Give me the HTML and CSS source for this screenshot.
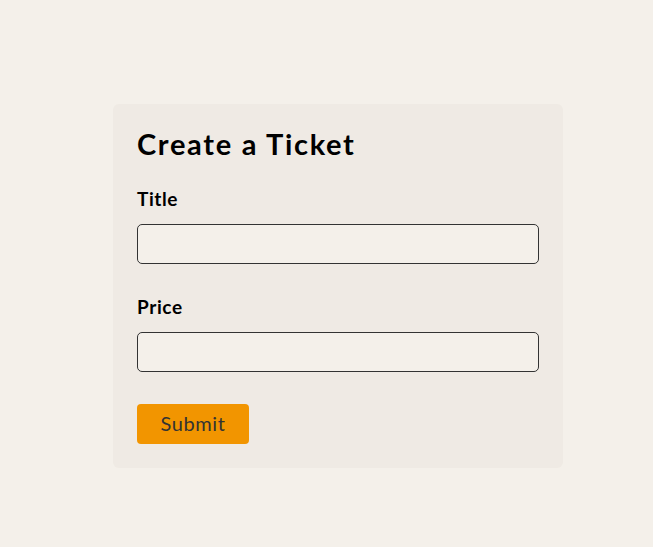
FILE: index.html
```html
<!DOCTYPE html>
<html>
<head>
<meta charset="utf-8">
<link rel="stylesheet" href="styles.css">
</head>
<body>
<main class="page">
  <form class="card">
    <h1 class="card-title">Create a Ticket</h1>
    <div class="field">
      <label class="field-label" for="title">Title</label>
      <input class="field-input" id="title" type="text">
    </div>
    <div class="field">
      <label class="field-label" for="price">Price</label>
      <input class="field-input" id="price" type="text">
    </div>
    <button class="submit" type="button">Submit</button>
  </form>
</main>
</body>
</html>
```
FILE: styles.css
```css
html, body {
  margin: 0;
  padding: 0;
  background: #f4f0ea;
}
body {
  font-family: Lato, "Open Sans", sans-serif;
  color: #000;
}
.page {
  padding-top: 104px;
  padding-left: 113px;
}
.card {
  width: 402px;
  padding: 24px 24px 24px;
  background: #efeae4;
  border-radius: 6px;
  display: flex;
  flex-direction: column;
  align-items: flex-start;
}
.card-title {
  margin: 0;
  font-size: 29px;
  font-weight: 700;
  letter-spacing: 1.7px;
  line-height: 32px;
  margin-bottom: 28px;
}
.field {
  display: flex;
  flex-direction: column;
  width: 100%;
  margin-bottom: 32px;
}
.field-label {
  font-size: 19px;
  font-weight: 700;
  letter-spacing: 0.6px;
  line-height: 22px;
  margin-bottom: 14px;
}
.field-input {
  box-sizing: border-box;
  width: 100%;
  height: 40px;
  border: 1px solid #333;
  border-radius: 5px;
  background: #f4f0ea;
  margin: 0;
}
.submit {
  width: 112px;
  height: 40px;
  padding: 0 0 3px;
  border: none;
  border-radius: 4px;
  background: #f29500;
  color: #333;
  font-family: Lato, sans-serif;
  font-size: 20px;
  letter-spacing: 0.6px;
}
```
